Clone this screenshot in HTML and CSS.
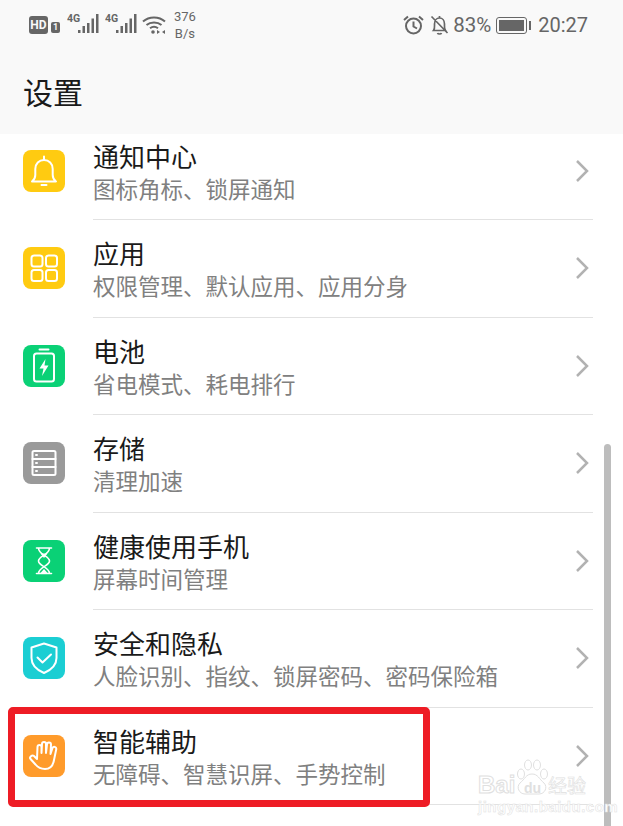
FILE: index.html
```html
<!DOCTYPE html>
<html lang="zh-CN">
<head>
  <meta charset="UTF-8">
  <title>设置</title>
  <link rel="stylesheet" href="styles.css">
</head>
<body>
  <div class="screen">
    <header class="top">
      <div class="status">
        <div class="status-left">
          <span class="hd">HD</span>
          <span class="sim">1</span>
          <svg class="signal" width="32" height="22" viewBox="0 -2 32 22">
            <text x="0" y="8" class="four-g">4G</text>
            <rect x="11" y="16" width="2.500" height="3"/><rect x="15.500" y="12" width="2.500" height="7"/><rect x="20" y="9" width="2.500" height="10"/><rect x="24.500" y="4.500" width="2.500" height="14.500"/><rect x="29" y="0" width="2.500" height="19"/>
          </svg>
          <svg class="signal" width="32" height="22" viewBox="0 -2 32 22">
            <text x="0" y="8" class="four-g">4G</text>
            <rect x="11" y="16" width="2.500" height="3"/><rect x="15.500" y="12" width="2.500" height="7"/><rect x="20" y="9" width="2.500" height="10"/><rect x="24.500" y="4.500" width="2.500" height="14.500"/><rect x="29" y="0" width="2.500" height="19"/>
          </svg>
          <svg class="wifi" width="24" height="20" viewBox="0 0 24 20">
            <path d="M1 6.500C7 1 17 1 23 6.500M4.500 10C8.500 6.500 15.500 6.500 19.500 10M8 13.300C10.300 11.500 13.700 11.500 16 13.300"/>
            <circle cx="11" cy="17" r="1.800"/>
            <path class="fill" d="M15 15l3 2-3 2zM23 15l-3 2 3 2z"/>
          </svg>
          <div class="speed"><span>376</span><span>B/s</span></div>
        </div>
        <div class="status-right">
          <svg class="alarm" width="21" height="20" viewBox="0 0 21 20">
            <circle cx="10.500" cy="11" r="7.500"/>
            <path d="M10.500 6.500V11.500L14 13.500M1 5L5 1.500M20 5L16 1.500"/>
          </svg>
          <svg class="bell-off" width="19" height="20" viewBox="0 0 19 20">
            <path d="M3.500 15.500C5 13.500 4.500 11 4.500 9C4.500 5.500 6.500 3 9.500 3C12.500 3 14.500 5.500 14.500 9C14.500 11 14 13.500 15.500 15.500ZM1.500 1.500L17.500 18M7.500 18C8 19.300 11 19.300 11.500 18M9.500 1V3"/>
          </svg>
          <span class="pct">83%</span>
          <span class="battery"><span class="battery-fill"></span></span>
          <span class="time">20:27</span>
        </div>
      </div>
      <h1 class="title">设置</h1>
    </header>

    <div class="list">
      <div class="row">
        <span class="icon yellow">
          <svg viewBox="0 0 42 42"><path d="M9 31.500C11 30 12.300 28.500 12.300 25V19C12.300 13.500 16 10 21 10C26 10 29.700 13.500 29.700 19V25C29.700 28.500 31 30 33 31.500ZM21 6.500V10M18.500 35H23.500"/></svg>
        </span>
        <div class="body">
          <div class="name">通知中心</div>
          <div class="desc">图标角标、锁屏通知</div>
        </div>
        <svg class="chev" viewBox="0 0 14 24"><path d="M2 2L12 12L2 22"/></svg>
      </div>
      <div class="row">
        <span class="icon yellow">
          <svg viewBox="0 0 42 42"><rect x="8.500" y="8.500" width="11" height="11" rx="2.500"/><rect x="23" y="8.500" width="11" height="11" rx="2.500"/><rect x="8.500" y="23" width="11" height="11" rx="2.500"/><rect x="23" y="23" width="11" height="11" rx="2.500"/></svg>
        </span>
        <div class="body">
          <div class="name">应用</div>
          <div class="desc">权限管理、默认应用、应用分身</div>
        </div>
        <svg class="chev" viewBox="0 0 14 24"><path d="M2 2L12 12L2 22"/></svg>
      </div>
      <div class="row">
        <span class="icon green">
          <svg viewBox="0 0 42 42"><rect x="11" y="8.500" width="20" height="28" rx="2.500"/><path d="M16.500 4.500H25.500"/><path class="solid" d="M22.500 14L16.500 23.500H20.500L19 31L25.500 20.500H21.500Z"/></svg>
        </span>
        <div class="body">
          <div class="name">电池</div>
          <div class="desc">省电模式、耗电排行</div>
        </div>
        <svg class="chev" viewBox="0 0 14 24"><path d="M2 2L12 12L2 22"/></svg>
      </div>
      <div class="row">
        <span class="icon gray">
          <svg viewBox="0 0 42 42"><rect x="9.500" y="9" width="23" height="24" rx="1.500"/><path d="M9.500 17H32.500M9.500 25H32.500"/><path d="M13 13H14M13 21H14M13 29H14"/></svg>
        </span>
        <div class="body">
          <div class="name">存储</div>
          <div class="desc">清理加速</div>
        </div>
        <svg class="chev" viewBox="0 0 14 24"><path d="M2 2L12 12L2 22"/></svg>
      </div>
      <div class="row">
        <span class="icon green">
          <svg class="thin" viewBox="0 0 42 42"><path d="M13.500 8H28.500M13.500 33.500H28.500M15.500 8C15.500 15 26.500 16 26.500 21C26.500 26 15.500 27 15.500 33.500M26.500 8C26.500 15 15.500 16 15.500 21C15.500 26 26.500 27 26.500 33.500"/><path class="solid" d="M17.500 13.500H24.500L21 18ZM17.500 33L21 29L24.500 33Z"/></svg>
        </span>
        <div class="body">
          <div class="name">健康使用手机</div>
          <div class="desc">屏幕时间管理</div>
        </div>
        <svg class="chev" viewBox="0 0 14 24"><path d="M2 2L12 12L2 22"/></svg>
      </div>
      <div class="row">
        <span class="icon teal">
          <svg viewBox="0 0 42 42"><path d="M21 6.500L33.500 10.500V21C33.500 28 28 33 21 36C14 33 8.500 28 8.500 21V10.500Z"/><path d="M14.500 20.500L19.500 25.500L28 17.500"/></svg>
        </span>
        <div class="body">
          <div class="name">安全和隐私</div>
          <div class="desc">人脸识别、指纹、锁屏密码、密码保险箱</div>
        </div>
        <svg class="chev" viewBox="0 0 14 24"><path d="M2 2L12 12L2 22"/></svg>
      </div>
      <div class="row">
        <span class="icon orange">
          <svg viewBox="0 0 42 42"><path d="M14 24L14.500 12a2 2 0 0 1 4 0L18.500 18L19 9a2 2 0 0 1 4 0L23 18L24 9.500a2 2 0 0 1 4 .2L27.500 19L29.500 13a2 2 0 0 1 3.800 1L31 25C30 31 27 34 22 34C17 34 14.500 32 12.500 29.500L7.500 24C6 22 9 19.500 11 21L14 24"/></svg>
        </span>
        <div class="body">
          <div class="name">智能辅助</div>
          <div class="desc">无障碍、智慧识屏、手势控制</div>
        </div>
        <svg class="chev" viewBox="0 0 14 24"><path d="M2 2L12 12L2 22"/></svg>
      </div>
    </div>

    <div class="scrollbar"></div>
    <div class="highlight"></div>
    <div class="watermark">
      <svg class="paw" width="34" height="36" viewBox="0 0 34 36">
        <ellipse cx="6" cy="15" rx="3.500" ry="5"/><ellipse cx="13" cy="6" rx="3.500" ry="5"/><ellipse cx="22" cy="6" rx="3.500" ry="5"/><ellipse cx="29" cy="15" rx="3.500" ry="5"/>
        <path d="M17 15C11 15 10 20 5 24C1 28 4 35 10 35H24C30 35 33 28 29 24C24 20 23 15 17 15Z"/>
      </svg>
      <div class="wm-top"><span class="wm-bai">Bai</span><span class="wm-du">du</span><span class="wm-jy">经验</span></div>
      <div class="wm-url">jingyan.baidu.com</div>
    </div>
  </div>
</body>
</html>
```

FILE: styles.css
```css
body {
  margin: 0;
  background: #fff;
  font-family: "Noto Sans CJK SC", "Noto Sans", sans-serif;
}

.screen {
  position: relative;
  width: 623px;
  height: 826px;
  overflow: hidden;
  background: #fff;
}

/* top part, stays above the list */
.top {
  position: relative;
  z-index: 1;
  height: 134px;
  background: #f9f9f9;
}

.status {
  display: flex;
  justify-content: space-between;
  align-items: center;
  height: 50px;
  padding: 0 35px 0 29px;
  color: #666;
}

.status-left, .status-right {
  display: flex;
  align-items: center;
}

.hd {
  width: 19px;
  height: 18px;
  background: #666;
  color: #f9f9f9;
  border-radius: 3px;
  font: bold 12px/18px "Roboto", sans-serif;
  text-align: center;
}

.sim {
  width: 9px;
  height: 11px;
  margin: 4px 0 0 3px;
  background: #666;
  color: #f9f9f9;
  border-radius: 2px;
  font: bold 9px/11px "Roboto", sans-serif;
  text-align: center;
}

.signal {
  margin: 0 0 4px 7px;
  fill: #666;
}

.signal + .signal {
  margin-left: 6px;
}

.four-g {
  font: bold 10.500px "Roboto", sans-serif;
}

.wifi {
  margin-left: 5px;
  fill: #666;
}

.wifi path {
  fill: none;
  stroke: #666;
  stroke-width: 2;
}

.wifi .fill {
  fill: #666;
  stroke: none;
}

.speed {
  display: flex;
  flex-direction: column;
  margin-left: 8px;
  font: 13px/17px "Roboto", sans-serif;
  text-align: center;
}

.alarm, .bell-off {
  fill: none;
  stroke: #666;
  stroke-width: 2;
}

.bell-off {
  margin-left: 6px;
  stroke-width: 1.700;
}

.pct {
  margin-left: 4px;
  font: 20.500px "Roboto", sans-serif;
}

.battery {
  position: relative;
  display: block;
  width: 31px;
  height: 17px;
  margin: 0 4px 0 5px;
  padding: 2px;
  box-sizing: border-box;
  border: 1px solid #666;
  border-radius: 3px;
}

.battery::after {
  content: "";
  position: absolute;
  top: 3px;
  right: -5px;
  width: 2px;
  height: 9px;
  background: #666;
}

.battery-fill {
  display: block;
  width: 25px;
  height: 11px;
  background: #666;
}

.time {
  margin-left: 7px;
  font: 20px "Roboto", sans-serif;
}

.title {
  margin: 0;
  padding: 0 0 0 23px;
  font-size: 30px;
  font-weight: 400;
  line-height: 82px;
  color: #1a1a1a;
}

/* first row is partly scrolled under the header */
.list {
  margin-top: -12px;
}

.row {
  display: flex;
  align-items: center;
  height: 97.500px;
  padding: 0 34px 0 23px;
}

.icon {
  flex: none;
  width: 42px;
  height: 42px;
  border-radius: 8px;
}

.icon svg {
  display: block;
  width: 42px;
  height: 42px;
  fill: none;
  stroke: #fff;
  stroke-width: 2;
  stroke-linecap: round;
  stroke-linejoin: round;
}

.icon svg.thin {
  stroke-width: 1.600;
}

.icon svg .solid {
  fill: #fff;
  stroke: none;
}

.yellow { background: #ffcb11; }
.green { background: #0ad176; }
.gray { background: #9a9a9a; }
.teal { background: #1bced3; }
.orange { background: #ff9b2b; }

.body {
  flex: 1;
  align-self: stretch;
  display: flex;
  flex-direction: column;
  justify-content: center;
  margin: 0 -24px -.5px 28px;
  border-bottom: 1px solid #e2e2e2;
  box-sizing: border-box;
}

.name {
  font-size: 26px;
  line-height: 34px;
  color: #1a1a1a;
}

.desc {
  font-size: 22.500px;
  line-height: 30px;
  color: #808080;
}

.chev {
  flex: none;
  width: 14px;
  height: 24px;
  margin-left: 6px;
  fill: none;
  stroke: #b2b2b2;
  stroke-width: 2.500;
}

.scrollbar {
  position: absolute;
  top: 444px;
  bottom: 0;
  left: 604px;
  width: 7px;
  background: #bdbdbd;
  border-radius: 4px 4px 0 0;
}

.highlight {
  position: absolute;
  left: 8px;
  top: 707px;
  width: 422px;
  height: 100px;
  box-sizing: border-box;
  border: 7px solid #ee1c25;
  border-radius: 5px;
}

.watermark {
  position: absolute;
  left: 478px;
  top: 759px;
  width: 112px;
  height: 56px;
  color: #fff;
}

.paw {
  position: absolute;
  left: 37px;
  top: 0;
  fill: #fff;
  stroke: #e0e0e0;
}

.wm-top {
  position: absolute;
  left: 0;
  top: 12px;
  display: flex;
  align-items: baseline;
  font-family: "Liberation Sans", sans-serif;
  font-weight: bold;
  -webkit-text-stroke: 1px #e0e0e0;
}

.wm-bai {
  width: 46px;
  font-size: 24px;
}

.wm-du {
  width: 24px;
  font-size: 14px;
  -webkit-text-stroke: 0;
  color: #e0e0e0;
}

.wm-jy {
  font-size: 19px;
  font-weight: 400;
  -webkit-text-stroke: .6px #e0e0e0;
  font-family: "Noto Sans CJK SC", sans-serif;
}

.wm-url {
  position: absolute;
  left: 0;
  top: 39px;
  font: bold 15px "Liberation Sans", sans-serif;
  letter-spacing: .5px;
  white-space: nowrap;
  -webkit-text-stroke: .5px #e0e0e0;
}
```
